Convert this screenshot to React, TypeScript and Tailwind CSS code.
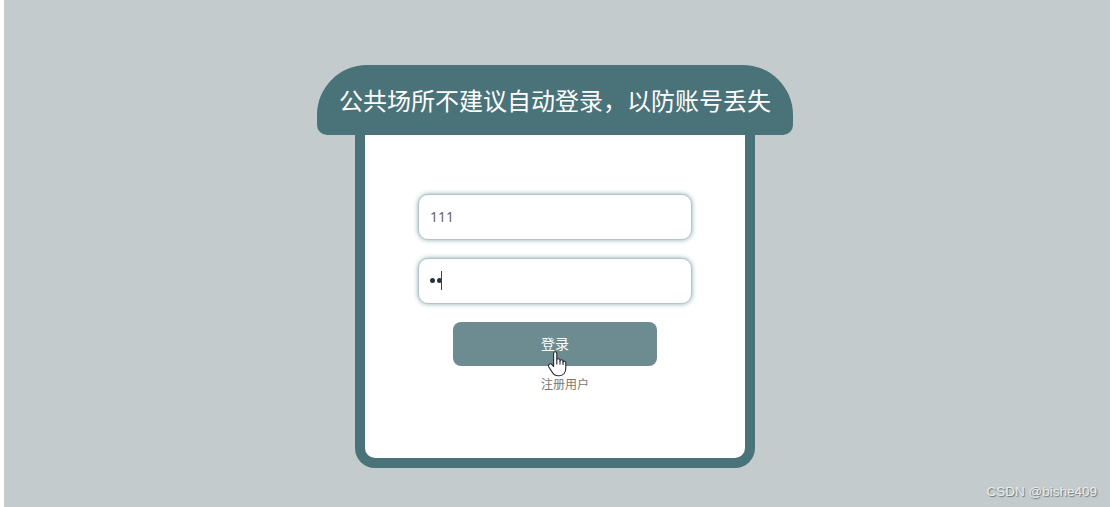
function HandCursor() {
  return (
    <svg
      className="absolute left-[94px] top-[28px] h-[27px] w-[21px]"
      viewBox="0 0 21 27"
      fill="white"
      stroke="#23292f"
      strokeWidth="1.1"
      strokeLinejoin="round"
      strokeLinecap="round"
    >
      <path d="M6.6 16.5V3.4C6.6 1.1 9.8 1.1 9.8 3.4V9.8C10 8.4 12.8 8.4 13 10V11C13.4 9.4 15.8 9.4 16 11.2V12C16.4 10.8 18.8 10.8 18.8 12.8V18C18.8 22.4 16.4 25.7 12.4 25.7H11C7.8 25.7 6.2 24 4.7 21.4L1.8 17C.4 14.6 3.4 12.8 5 14.6Z" />
      <path d="M9.8 10V14M13 11V14M16 12V14.5" fill="none" />
    </svg>
  );
}

function App() {
  return (
    <div className="relative h-[507px] w-[1112px] overflow-hidden bg-white pl-1 pr-0.5 font-['Noto_Sans','Noto_Sans_CJK_SC',sans-serif]">
      <main className="flex h-full flex-col items-center bg-[#c4cbcc] pr-1 pt-[65px]">
        <header className="flex h-[70px] w-[476px] items-center justify-center rounded-t-[50px] rounded-b-[10px] bg-[#4a7279] pt-px">
          <h1 className="whitespace-nowrap text-2xl text-white">公共场所不建议自动登录，以防账号丢失</h1>
        </header>

        <form className="flex h-[333px] w-[400px] flex-col items-center rounded-b-[20px] border-x-10 border-b-10 border-[#4a7279] bg-white pt-[59px]">
          <input
            type="text"
            defaultValue="111"
            className="h-[46px] w-[274px] rounded-[10px] border border-[#b3c5c8] bg-white px-[11px] pb-0.5 text-sm text-[#666] shadow-[0_0_5px_#8fadb2] outline-none"
          />
          <div className="mt-[18px] flex h-[46px] w-[274px] items-center rounded-[10px] border border-[#b3c5c8] bg-white px-[11px] pb-0.5 shadow-[0_0_5px_#8fadb2]">
            <span className="flex gap-0.5" aria-label="password">
              <i className="size-[5px] rounded-full bg-[#26333b]" />
              <i className="size-[5px] rounded-full bg-[#26333b]" />
            </span>
            <span className="-ml-px h-[19px] w-px bg-[#444]" />
          </div>

          <div className="relative mt-[18px] h-11 w-[204px]">
            <button
              type="button"
              className="h-full w-full rounded-lg bg-[#6d8c92] text-sm text-white"
            >
              登录
            </button>
            <HandCursor />
          </div>
          <a className="ml-[20px] mt-[11px] text-xs leading-4 text-[#777]">注册用户</a>
        </form>
      </main>

      <span className="absolute bottom-[7px] right-[15px] whitespace-nowrap font-['Liberation_Sans',sans-serif] text-[13.5px] leading-4 text-[#e9eced] [text-shadow:1px_1px_1px_#697477]">
        CSDN @bishe409
      </span>
    </div>
  );
}

export default App;
